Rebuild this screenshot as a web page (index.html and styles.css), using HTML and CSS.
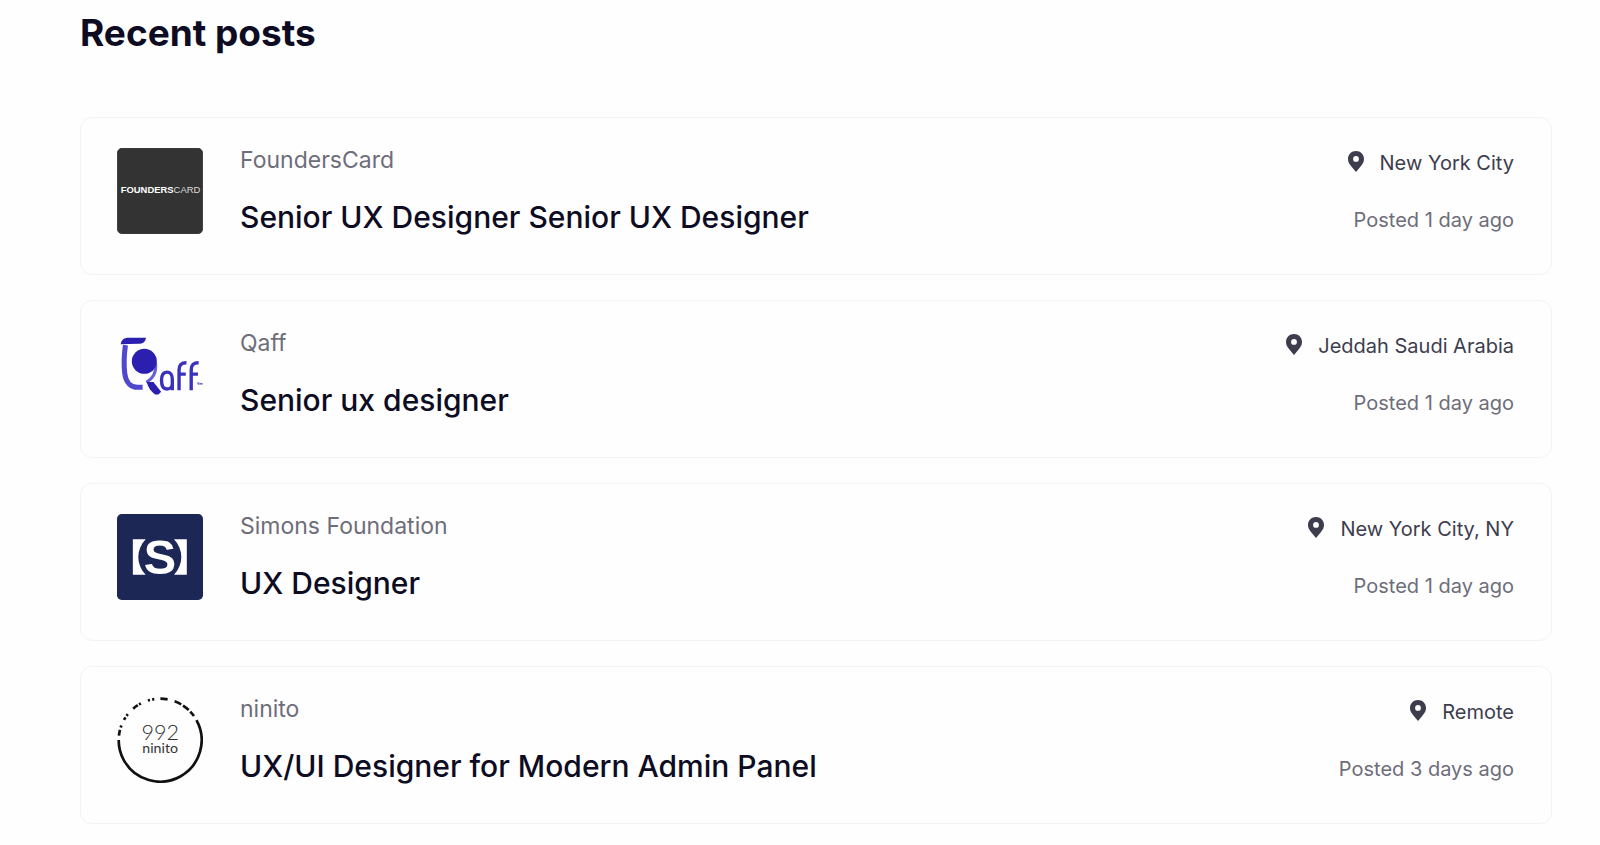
FILE: index.html
```html
<!DOCTYPE html>
<html lang="en">
<head>
  <meta charset="UTF-8">
  <meta name="viewport" content="width=device-width, initial-scale=1.0">
  <title>Recent posts</title>
  <link rel="stylesheet" href="styles.css">
</head>
<body>

  <!-- Shared map pin icon -->
  <svg class="sprite" aria-hidden="true">
    <symbol id="pin" viewBox="0 0 16 21">
      <path fill-rule="evenodd" d="M8 0C3.500 0 0 3.500 0 8c0 2.600 1.200 4.800 3 7l5 6 5-6c1.800-2.200 3-4.400 3-7 0-4.500-3.500-8-8-8zm0 5a2.900 2.900 0 1 1 0 5.800A2.900 2.900 0 0 1 8 5z"/>
    </symbol>
  </svg>

  <main class="container">
    <h1>Recent posts</h1>

    <ul class="post-list">

      <li class="post">
        <svg class="logo" viewBox="0 0 255 255" role="img" aria-label="FoundersCard logo">
          <rect x="1" y="1" width="253" height="253" rx="14" fill="#333" stroke="#1c1c1c" stroke-width="2"/>
          <text x="129" y="134" text-anchor="middle" class="founders"><tspan class="founders-bold">FOUNDERS</tspan>CARD</text>
        </svg>
        <div class="info">
          <p class="company">FoundersCard</p>
          <h2><a href="#">Senior UX Designer Senior UX Designer</a></h2>
        </div>
        <div class="meta">
          <p class="location"><svg class="pin"><use href="#pin"/></svg>New York City</p>
          <p class="posted">Posted 1 day ago</p>
        </div>
      </li>

      <li class="post">
        <svg class="logo" viewBox="0 0 255 255" role="img" aria-label="Qaff logo">
          <path d="M25 42c-4 28-5 58-2 84 3 26 18 41 38 41h15" fill="none" stroke="#4f48cf" stroke-width="15"/>
          <path d="M11 39c2-13 10-19 24-19h51c-2 13-9 18-23 18z" fill="#2a1fae"/>
          <path d="M114 95c4 27-8 46-27 57" fill="none" stroke="#6660d6" stroke-width="9"/>
          <circle cx="81" cy="90" r="37" fill="#2a1fae"/>
          <path d="M88 151h20l23 29-8 8h-10c-12-8-21-22-25-37z" fill="#2a1fae"/>
          <g fill="none" stroke="#3a31bd" stroke-width="10">
            <path d="M164 176v-34c0-13-7-20-16-20s-16 8-16 25 7 25 16 25 16-6 16-15"/>
            <path d="M184 176v-60c0-15 6-22 22-22M184 128h20M220 176v-60c0-15 6-22 22-22M220 128h20"/>
          </g>
          <path d="M237 154h7m-3 0v6m5 0v-6l3 4 3-4v6" fill="none" stroke="#3a31bd" stroke-width="2"/>
        </svg>
        <div class="info">
          <p class="company">Qaff</p>
          <h2><a href="#">Senior ux designer</a></h2>
        </div>
        <div class="meta">
          <p class="location"><svg class="pin"><use href="#pin"/></svg>Jeddah Saudi Arabia</p>
          <p class="posted">Posted 1 day ago</p>
        </div>
      </li>

      <li class="post">
        <svg class="logo" viewBox="0 0 255 255" role="img" aria-label="Simons Foundation logo">
          <rect width="255" height="255" rx="14" fill="#1d2755"/>
          <path d="M47 75h38c-29 30-29 75 0 105H47zM207 75h-38c29 30 29 75 0 105h38z" fill="#fff"/>
          <text x="127" y="177" text-anchor="middle" class="simons">S</text>
        </svg>
        <div class="info">
          <p class="company">Simons Foundation</p>
          <h2><a href="#">UX Designer</a></h2>
        </div>
        <div class="meta">
          <p class="location"><svg class="pin"><use href="#pin"/></svg>New York City, NY</p>
          <p class="posted">Posted 1 day ago</p>
        </div>
      </li>

      <li class="post">
        <svg class="logo" viewBox="0 0 255 255" role="img" aria-label="ninito logo">
          <circle cx="128" cy="128" r="123" fill="none" stroke="#111" stroke-width="8" pathLength="360" transform="rotate(-29 128 128)"
            stroke-dasharray="209 6 8 3.500 3 8.500 4 2.500 3 10.500 8 2 3 10.500 3 3 3 8.500 10 10 10 3 10 3 8 7"/>
          <text x="128" y="127" text-anchor="middle" class="ninito-number">992</text>
          <text x="128" y="166" text-anchor="middle" class="ninito-name">ninito</text>
        </svg>
        <div class="info">
          <p class="company">ninito</p>
          <h2><a href="#">UX/UI Designer for Modern Admin Panel</a></h2>
        </div>
        <div class="meta">
          <p class="location"><svg class="pin"><use href="#pin"/></svg>Remote</p>
          <p class="posted">Posted 3 days ago</p>
        </div>
      </li>

    </ul>
  </main>

</body>
</html>
```

FILE: styles.css
```css
* {
  margin: 0;
  padding: 0;
  box-sizing: border-box;
}

body {
  background-color: #fefefe;
  color: #0d0c22;
  font-family: Inter, 'Liberation Sans', sans-serif;
}

.sprite {
  display: none;
}

.container {
  padding: 10px 48px 20px 80px;
}

h1 {
  font-size: 37px;
  line-height: 46px;
  font-weight: 700;
  margin-bottom: 61px;
}

/* Post cards */
.post-list {
  display: flex;
  flex-direction: column;
  gap: 25px;
  list-style: none;
}

.post {
  display: flex;
  align-items: flex-start;
  gap: 37px;
  padding: 30px 37px 37px 36px;
  border: 1px solid #f3f3f4;
  border-radius: 12px;
}

.logo {
  width: 86px;
  height: 86px;
  flex-shrink: 0;
}

.info {
  flex: 1;
}

.company {
  color: #6e6d7a;
  font-size: 23px;
  line-height: 24px;
  margin-bottom: 25px;
}

h2 {
  font-size: 30px;
  line-height: 40px;
  font-weight: 500;
}

h2 a {
  color: inherit;
  text-decoration: none;
}

.meta {
  display: flex;
  flex-direction: column;
  align-items: flex-end;
  gap: 33px;
  padding-top: 3px;
  font-size: 20px;
  line-height: 24px;
}

.location {
  display: flex;
  gap: 16px;
  color: #3d3d4e;
}

.posted {
  color: #6e6d7a;
}

.pin {
  width: 16px;
  height: 21px;
  fill: #3d3d4e;
}

/* Lettering inside the logos */
.founders {
  font-family: 'Liberation Sans', sans-serif;
  font-size: 28px;
  fill: #ddd;
}

.founders-bold {
  font-weight: 700;
  fill: #fff;
}

.simons {
  font-family: 'Liberation Sans', sans-serif;
  font-size: 144px;
  font-weight: 700;
  fill: #fff;
}

.ninito-number {
  font-family: Lato, sans-serif;
  font-size: 64px;
  font-weight: 300;
  fill: #333;
}

.ninito-name {
  font-family: Lato, sans-serif;
  font-size: 42px;
  fill: #333;
}
```
